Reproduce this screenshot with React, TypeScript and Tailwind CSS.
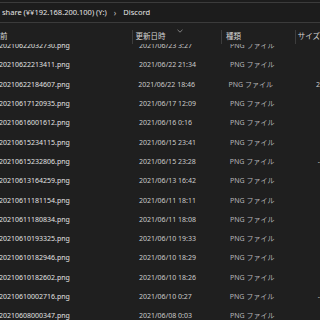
import React from "react";

type Row = {
  name: string;
  date: string;
  size?: string;
};

const rows: Row[] = [
  { name: "20210622032730.png", date: "2021/06/23 3:27" },
  { name: "20210622213411.png", date: "2021/06/22 21:34" },
  { name: "20210622184607.png", date: "2021/06/22 18:46", size: "2" },
  { name: "20210617120935.png", date: "2021/06/17 12:09" },
  { name: "20210616001612.png", date: "2021/06/16 0:16" },
  { name: "20210615234115.png", date: "2021/06/15 23:41" },
  { name: "20210615232806.png", date: "2021/06/15 23:28", size: "-" },
  { name: "20210613164259.png", date: "2021/06/13 16:42" },
  { name: "20210611181154.png", date: "2021/06/11 18:11" },
  { name: "20210611180834.png", date: "2021/06/11 18:08" },
  { name: "20210610193325.png", date: "2021/06/10 19:33" },
  { name: "20210610182946.png", date: "2021/06/10 18:29" },
  { name: "20210610182602.png", date: "2021/06/10 18:26" },
  { name: "20210610002716.png", date: "2021/06/10 0:27", size: "-" },
  { name: "20210608000347.png", date: "2021/06/08 0:03" },
];

export default function App() {
  return (
    <div
      className="w-[320px] h-[320px] overflow-hidden bg-[#1f1f1f] flex flex-col text-[7px] leading-none"
      style={{ fontFamily: '"Noto Sans", "Noto Sans CJK JP", sans-serif' }}
    >
      {/* Breadcrumb bar */}
      <div className="h-[2px] bg-[#1c1c1c]" />
      <div className="h-[21px] bg-[#1c1c1c] border-y border-[#3b3b3b] flex items-center gap-[7px] pl-[2px] text-[#e6e6e6] text-[7.5px] shrink-0">
        <span className="whitespace-nowrap">share (¥¥192.168.200.100) (Y:)</span>
        <span className="text-[#c8c8c8] text-[8px]">›</span>
        <span>Discord</span>
      </div>

      {/* Column header */}
      <div className="relative h-[21px] flex items-end text-[#d4d4d4] text-[7.5px] shrink-0 whitespace-nowrap overflow-hidden">
        <div className="w-[134px] h-[14px] flex items-center">
          <span className="ml-[-7.5px]">名前</span>
        </div>
        <div className="w-px h-[14px] bg-[#3d3d3d]" />
        <div className="w-[90px] h-[14px] flex items-center pl-[3px]">更新日時</div>
        <div className="w-px h-[14px] bg-[#3d3d3d]" />
        <div className="w-[74px] h-[14px] flex items-center pl-[4px]">種類</div>
        <div className="w-px h-[14px] bg-[#3d3d3d]" />
        <div className="h-[14px] flex items-center pl-[2px]">サイズ</div>
        <svg className="absolute left-[177px] top-[6px]" width="6" height="4" viewBox="0 0 6 4">
          <path d="M0.5 0.8 L3 3.2 L5.5 0.8" fill="none" stroke="#9a9a9a" strokeWidth="0.8" />
        </svg>
      </div>

      {/* File list */}
      <div className="flex-1 overflow-hidden">
        <div className="-mt-[8px] flex flex-col">
          {rows.map((r) => (
            <div key={r.name} className="h-[19.3px] flex items-center whitespace-nowrap shrink-0">
              <div className="w-[139px] text-[#e2e2e2]">
                <span className="ml-[-1px]">{r.name}</span>
              </div>
              <div className="w-[91px] text-[#cbcbcb]">{r.date}</div>
              <div className="w-[88px] text-[#b4b4b8]">PNG ファイル</div>
              <div className="text-[#cbcbcb]">{r.size ?? ""}</div>
            </div>
          ))}
        </div>
      </div>
    </div>
  );
}
